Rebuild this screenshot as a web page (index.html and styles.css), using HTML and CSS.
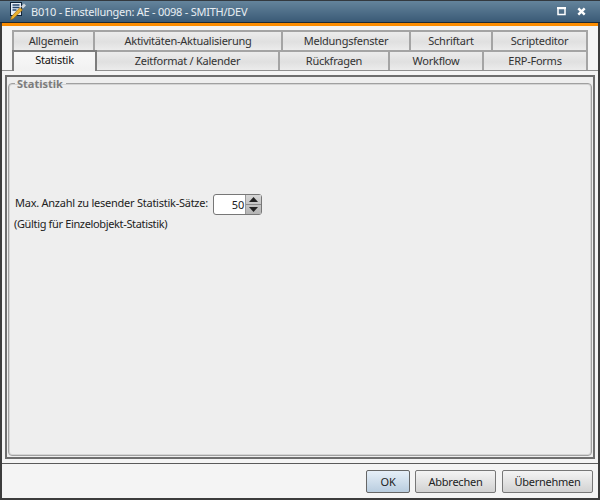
FILE: index.html
```html
<!DOCTYPE html>
<html lang="de">
<head>
<meta charset="utf-8">
<title>B010 - Einstellungen</title>
<link rel="stylesheet" href="styles.css">
</head>
<body>
<div class="window">
  <header class="titlebar">
    <svg class="appicon" width="18" height="20" viewBox="0 0 18 20">
      <rect x="1.5" y="0.5" width="11" height="13" fill="#e4ecf6" stroke="#0e2238"/>
      <path d="M3.500 3h7M3.500 5.500h7M3.500 8h4" stroke="#27476e" stroke-width="1.300"/>
      <path d="M1.500 18l1-3.500 8.500-9 2.500 2.500-9 8.500z" fill="#eab02e" stroke="#8a5c10" stroke-width=".6"/>
      <path d="M12 4.500l3-3 2 2-3 3z" fill="#cfd4da"/>
    </svg>
    <span class="title">B010 - Einstellungen: AE - 0098 - SMITH/DEV</span>
    <svg class="winbtn" width="10" height="9" viewBox="0 0 10 9"><rect x="1" y="1.500" width="7" height="6" fill="none" stroke="#fff" stroke-width="1.500"/><rect x="0" y="0" width="9" height="2" fill="#fff"/></svg>
    <svg class="winbtn close" width="9" height="9" viewBox="0 0 9 9"><path d="M1.300 1.300l6.400 6.400M7.700 1.300l-6.400 6.400" stroke="#fff" stroke-width="2.400"/></svg>
  </header>
  <div class="accent"></div>
  <main class="content">
    <div class="tabs">
      <div class="tabrow">
        <div class="tab w83">Allgemein</div>
        <div class="tab w188">Aktivitäten-Aktualisierung</div>
        <div class="tab w128">Meldungsfenster</div>
        <div class="tab w82">Schriftart</div>
        <div class="tab w95">Scripteditor</div>
      </div>
      <div class="tabrow">
        <div class="tab active w85">Statistik</div>
        <div class="tab w183">Zeitformat / Kalender</div>
        <div class="tab w110">Rückfragen</div>
        <div class="tab w94">Workflow</div>
        <div class="tab w104">ERP-Forms</div>
      </div>
    </div>
    <section class="pane">
      <div class="inner">
        <fieldset class="group">
          <legend>Statistik</legend>
          <div class="field">
            <label class="fieldlabel">Max. Anzahl zu lesender Statistik-Sätze:</label>
            <div class="spinner">
              <span class="value">50</span>
              <div class="arrows">
                <span class="arrow"><svg width="9" height="5" viewBox="0 0 9 5"><path d="M4.500 0L9 5H0z" fill="#222"/></svg></span>
                <span class="arrow"><svg width="9" height="5" viewBox="0 0 9 5"><path d="M0 0h9L4.500 5z" fill="#222"/></svg></span>
              </div>
            </div>
          </div>
          <p class="note">(Gültig für Einzelobjekt-Statistik)</p>
        </fieldset>
      </div>
    </section>
    <footer class="footer">
      <button class="btn primary">OK</button>
      <button class="btn wide">Abbrechen</button>
      <button class="btn wider">Übernehmen</button>
    </footer>
  </main>
</div>
</body>
</html>
```
FILE: styles.css
```css
* { box-sizing: border-box; }
html, body { margin: 0; padding: 0; }
body { font-family: "Noto Sans", "Liberation Sans", sans-serif; font-size: 11px; letter-spacing: -0.25px; color: #222; }

.window {
  width: 600px; height: 500px;
  border: 2px solid #3c3c3c; border-top: 0;
  display: flex; flex-direction: column;
  background: #eeeeee;
}
.titlebar {
  height: 23px; flex: none;
  margin: 0 -2px;
  padding: 0 14px 0 9px;
  display: flex; align-items: center;
  background: linear-gradient(#64849c, #3a5a76);
  border-top: 1px solid #33393f;
  border-bottom: 1px solid #1f2a33;
}
.appicon { flex: none; margin-right: 4px; }
.title { flex: 1; color: #e8eef3; font-size: 11px; padding-bottom: 1px; }
.winbtn { flex: none; margin-left: 10px; }
.accent { height: 3px; flex: none; background: #fb8c00; }

.content { flex: 1; display: flex; flex-direction: column; background: #f4f4f4; min-height: 0; }
.tabs { padding: 4px 0 0 10px; flex: none; position: relative; z-index: 1; }
.tabrow { display: flex; height: 20px; }
.tab {
  flex: none; height: 20px;
  display: flex; align-items: center; justify-content: center;
  border: 2px solid #a4a4a4; border-width: 2px 2px 0 0;
  background: linear-gradient(#ececec, #e0e0e0 55%, #ececec);
  color: #333;
  font-size: 11px;
  padding-bottom: 2px;
}
.tabrow .tab:first-child { border-left: 2px solid #a4a4a4; }
.tabrow .tab.active {
  height: 21px;
  background: linear-gradient(#f8f8f8, #f1f1f1);
  color: #111;
  border-color: #7c7c7c;
  padding-bottom: 4px;
}
.w82 { width: 82px; } .w83 { width: 83px; } .w85 { width: 85px; } .w94 { width: 94px; } .w95 { width: 95px; }
.w104 { width: 104px; } .w110 { width: 110px; } .w128 { width: 128px; }
.w183 { width: 183px; } .w188 { width: 188px; }

.pane {
  flex: 1; min-height: 0;
  border-top: 1px solid #8f8f8f;
  border-bottom: 1px solid #5a5a5a;
  padding: 4px 3px 4px 3px;
  display: flex;
}
.inner {
  flex: 1;
  border: 2px solid #6e6e6e;
  padding: 0 1px 1px 1px;
  display: flex;
  background: #eeeeee;
}
.group {
  flex: 1; margin: 0; min-width: 0;
  border: 1px solid #a0a0a0; border-radius: 4px;
  box-shadow: inset 0 0 0 1px #d4d4d4;
  padding: 104px 6px 0 6px;
  background: #eeeeee;
}
.group legend {
  margin-left: 0; padding: 0 3px 0 2px;
  font-weight: 700; font-size: 11px; letter-spacing: 0; color: #7c7c7c;
  line-height: 13px;
}
.field { display: flex; align-items: center; height: 21px; }
.fieldlabel { font-size: 11px; color: #222; margin-right: 5px; padding-bottom: 4px; }
.spinner {
  width: 49px; height: 21px; flex: none;
  display: flex;
  border: 1px solid #777; border-radius: 3px;
  background: #fff;
}
.value { flex: 1; text-align: right; padding-right: 1px; line-height: 19px; font-size: 11px; }
.arrows { width: 16px; display: flex; flex-direction: column; background: linear-gradient(#d6d6d6, #b4b4b4); border-left: 1px solid #999; }
.arrow { flex: 1; display: flex; align-items: center; justify-content: center; }
.arrow + .arrow { border-top: 1px solid #8a8a8a; }
.note { margin: 1px 0 0 -1px; font-size: 11px; letter-spacing: -0.35px; color: #222; line-height: 15px; }

.footer {
  height: 34px; flex: none;
  display: flex; justify-content: flex-end; gap: 5px;
  padding: 6px 5px 0 0;
}
.btn {
  height: 23px; padding: 0;
  font: 11px "Noto Sans", "Liberation Sans", sans-serif; letter-spacing: -0.25px; color: #222;
  border: 1px solid #777; border-radius: 2px;
  background: linear-gradient(#f4f4f4, #d2d2d2);
  width: 44px;
}
.btn.primary { background: linear-gradient(#e6eff8, #b9cddf); border-color: #666; }
.btn.wide { width: 81px; margin-right: 1px; }
.btn.wider { width: 91px; }
```
